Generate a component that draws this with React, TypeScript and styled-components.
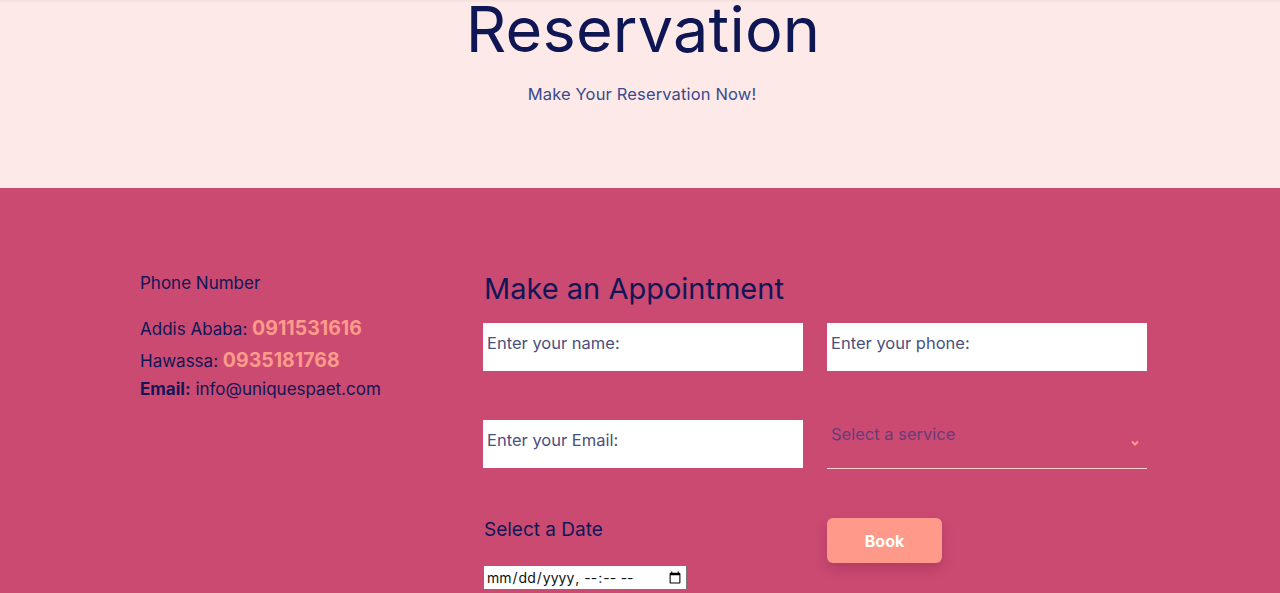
import React from "react";
import styled, { createGlobalStyle } from "styled-components";

const Global = createGlobalStyle`
  html, body { margin: 0; padding: 0; }
  body { font-family: Inter, "Open Sans", sans-serif; background: #cb4a72; overflow: hidden; }
  * { box-sizing: border-box; }
`;

const Hero = styled.header`
  height: 188px;
  background: #fde9e7;
  box-shadow: inset 0 3px 3px -2px rgba(0,0,0,0.06);
  display: flex;
  flex-direction: column;
  align-items: center;
`;

const Title = styled.h1`
  margin: -10px 0 0 6px;
  font-size: 63px;
  line-height: 78px;
  font-weight: 400;
  color: #0f1654;
  letter-spacing: 0.2px;
`;

const Subtitle = styled.p`
  margin: 15px 0 0 4px;
  font-size: 16.5px;
  line-height: 22px;
  color: #3b4a8c;
  letter-spacing: 0.15px;
`;

const Section = styled.section`
  background: #cb4a72;
  min-height: 405px;
  padding: 82px 0 0 140px;
  display: flex;
  gap: 24px;
`;

const Info = styled.div`
  width: 319px;
  color: #101656;
  font-size: 17px;
`;

const InfoTitle = styled.p`
  margin: 2px 0 20px;
  font-size: 17px;
  line-height: 22px;
`;

const InfoLine = styled.p`
  margin: 0 0 2px;
  font-size: 17px;
  line-height: 29px;
  &:last-child { line-height: 26px; margin-top: -2px; }
`;

const Num = styled.span`
  font-weight: 700;
  font-size: 19.5px;
  color: #ff9b8b;
`;

const FormCol = styled.div`
  width: 664px;
  display: flex;
  flex-direction: column;
`;

const FormTitle = styled.h2`
  margin: 0 0 15px;
  font-size: 29px;
  line-height: 38px;
  font-weight: 400;
  color: #101656;
  padding-left: 1px;
`;

const Grid = styled.div`
  display: grid;
  grid-template-columns: 320px 320px;
  column-gap: 24px;
  row-gap: 49px;
`;

const TextInput = styled.input`
  width: 320px;
  height: 48px;
  border: none;
  background: #fff;
  padding: 0 4px 8px;
  font-family: Inter, sans-serif;
  font-size: 16.5px;
  color: #4a4f7e;
  outline: none;
  &::placeholder { color: #4a4f7e; opacity: 1; }
`;

const SelectWrap = styled.div`
  position: relative;
  width: 320px;
  height: 49px;
  border-bottom: 1px solid #ffd7d0;
`;

const Select = styled.select`
  appearance: none;
  width: 100%;
  height: 100%;
  background: transparent;
  border: none;
  padding: 0 4px 20px;
  font-family: Inter, sans-serif;
  font-size: 16.5px;
  color: #6a3b79;
  outline: none;
`;

const Chevron = styled.svg`
  position: absolute;
  right: 7px;
  top: 19px;
  pointer-events: none;
`;

const DateCol = styled.div`
  display: flex;
  flex-direction: column;
`;

const DateLabel = styled.label`
  font-size: 19px;
  line-height: 24px;
  color: #101656;
  margin: 0 0 23px 1px;
`;

const DateInput = styled.input`
  width: 204px;
  height: 25px;
  font-size: 14px;
  font-family: Inter, sans-serif;
  border: 1px solid #767676;
  background: #fff;
  padding: 1px 2px;
  color: #111;
`;

const BookBtn = styled.button`
  width: 115px;
  height: 45px;
  border: none;
  border-radius: 6px;
  background: #ff998a;
  color: #fff;
  font-family: Inter, sans-serif;
  font-weight: 700;
  font-size: 16px;
  box-shadow: 0 6px 12px rgba(120, 20, 60, 0.28);
  cursor: pointer;
  margin-top: 0;
`;

export default function App() {
  return (
    <>
      <Global />
      <Hero>
        <Title>Reservation</Title>
        <Subtitle>Make Your Reservation Now!</Subtitle>
      </Hero>
      <Section>
        <Info>
          <InfoTitle>Phone Number</InfoTitle>
          <InfoLine>
            Addis Ababa: <Num>0911531616</Num>
          </InfoLine>
          <InfoLine>
            Hawassa: <Num>0935181768</Num>
          </InfoLine>
          <InfoLine>
            <b>Email:</b> info@uniquespaet.com
          </InfoLine>
        </Info>
        <FormCol>
          <FormTitle>Make an Appointment</FormTitle>
          <Grid>
            <TextInput placeholder="Enter your name:" />
            <TextInput placeholder="Enter your phone:" />
            <TextInput placeholder="Enter your Email:" />
            <SelectWrap>
              <Select defaultValue="">
                <option value="" disabled>
                  Select a service
                </option>
                <option>Massage</option>
                <option>Facial</option>
              </Select>
              <Chevron width="10" height="8" viewBox="0 0 10 8">
                <path d="M2 2.5 L5 5.5 L8 2.5" fill="none" stroke="#ff9b8b" strokeWidth="2" />
              </Chevron>
            </SelectWrap>
            <DateCol>
              <DateLabel>Select a Date</DateLabel>
              <DateInput type="datetime-local" />
            </DateCol>
            <div>
              <BookBtn>Book</BookBtn>
            </div>
          </Grid>
        </FormCol>
      </Section>
    </>
  );
}
